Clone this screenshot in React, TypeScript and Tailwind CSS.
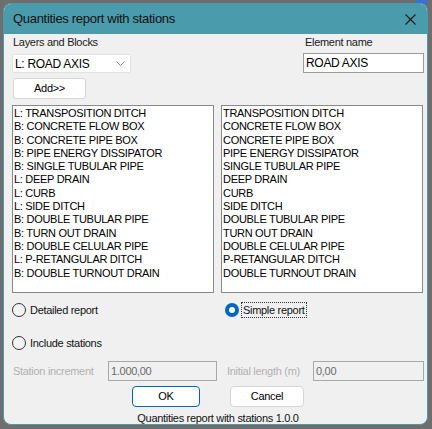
import React from "react";

const LAYERS = [
  "L: TRANSPOSITION DITCH",
  "B: CONCRETE FLOW BOX",
  "B: CONCRETE PIPE BOX",
  "B: PIPE ENERGY DISSIPATOR",
  "B: SINGLE TUBULAR PIPE",
  "L: DEEP DRAIN",
  "L: CURB",
  "L: SIDE DITCH",
  "B: DOUBLE TUBULAR PIPE",
  "B: TURN OUT DRAIN",
  "B: DOUBLE CELULAR PIPE",
  "L: P-RETANGULAR DITCH",
  "B: DOUBLE TURNOUT DRAIN",
];

// nomes sem o prefixo de camada/bloco
const NAMES = LAYERS.map((l) => l.slice(3));

function Radio({ checked, label, focused }: { checked?: boolean; label: string; focused?: boolean }) {
  return (
    <div className="flex items-center h-[16px]">
      {checked ? (
        <span className="w-[14px] h-[14px] rounded-full bg-[#0067c0] flex items-center justify-center shrink-0">
          <span className="w-[6px] h-[6px] rounded-full bg-white" />
        </span>
      ) : (
        <span className="w-[14px] h-[14px] rounded-full border border-[#333333] bg-[#f3f3f3] shrink-0" />
      )}
      <span
        className={`ml-[2px] px-[1px] leading-[14px] text-[#111] ${
          focused ? "border border-dotted border-[#333]" : "border border-transparent"
        }`}
      >
        {label}
      </span>
    </div>
  );
}

function ListBox({ items }: { items: string[] }) {
  return (
    <div className="w-[202px] h-[188px] bg-white border border-[#8a8a8a] pl-[1px] pt-[1px]">
      {items.map((it) => (
        <div key={it} className="leading-[13.3px] text-black whitespace-nowrap">
          {it}
        </div>
      ))}
    </div>
  );
}

export default function App() {
  return (
    <div
      className="relative w-[432px] h-[429px] bg-[#6e6e6e] pt-[3px] pl-[3px] text-[11px] tracking-[-0.3px]"
      style={{ fontFamily: '"Liberation Sans", Arial, sans-serif' }}
    >
      {/* pedaço azul da janela de trás */}
      <div className="absolute right-[4px] top-0 w-[12px] h-[4px] bg-[#3b6fd8] rounded-tr-[4px]" />

      <div className="relative w-[425px] h-[422px] rounded-[8px] border border-[#4a9bab] bg-[#f0f0f0] overflow-hidden">
        {/* barra de título */}
        <div className="h-[30px] bg-[#4a9bab] flex items-center justify-between pl-[9px] pr-[10px]">
          <span className="text-[13px] text-[#111]">Quantities report with stations</span>
          <svg width="11" height="11" viewBox="0 0 11 11" className="mr-[1px]">
            <path d="M0.5 0.5 L10.5 10.5 M10.5 0.5 L0.5 10.5" stroke="#1a1a1a" strokeWidth="1.1" />
          </svg>
        </div>

        <div className="pl-[8px] pr-[3px]">
          {/* topo: camada e nome */}
          <div className="flex justify-between mt-[2px]">
            <div className="flex flex-col">
              <span className="leading-[13px] pl-[1px] text-[#1a1a1a]">Layers and Blocks</span>
              <div className="mt-[5px] w-[119px] h-[19px] bg-white border border-[#e2e2e2] rounded-[2px] flex items-center justify-between pl-[2px] pr-[5px]">
                <span className="text-[12px] text-black">L: ROAD AXIS</span>
                <svg width="9" height="6" viewBox="0 0 9 6">
                  <path d="M0.5 0.5 L4.5 4.5 L8.5 0.5" fill="none" stroke="#8a8a8a" strokeWidth="1" />
                </svg>
              </div>
              <button className="mt-[5px] ml-[1px] w-[73px] h-[21px] bg-white border border-[#d6d6d6] rounded-[3px] text-[11px] text-black">
                Add&gt;&gt;
              </button>
            </div>
            <div className="flex flex-col w-[121px]">
              <span className="leading-[13px] pl-[2px] text-[#1a1a1a]">Element name</span>
              <div className="mt-[4px] h-[20px] bg-white border border-[#9a9a9a] flex items-center pl-[2px] text-[12px] text-black">
                ROAD AXIS
              </div>
            </div>
          </div>

          {/* listas */}
          <div className="flex gap-[7px] mt-[6px]">
            <ListBox items={LAYERS} />
            <ListBox items={NAMES} />
          </div>

          {/* tipo de relatório */}
          <div className="flex mt-[9px]">
            <div className="w-[209px]">
              <Radio label="Detailed report" />
            </div>
            <div className="pl-[4px]">
              <Radio checked focused label="Simple report" />
            </div>
          </div>

          <div className="mt-[17px]">
            <Radio label="Include stations" />
          </div>

          {/* estacas */}
          <div className="flex items-center mt-[10px] h-[20px]">
            <span className="w-[96px] pl-[1px] text-[#b0b0b0]">Station increment</span>
            <div className="w-[109px] h-[20px] border border-[#a8a8a8] bg-[#f0f0f0] pl-[2px] flex items-center text-[#6a6a6a]">
              1.000,00
            </div>
            <span className="w-[96px] pl-[10px] text-[#b0b0b0]">Initial length (m)</span>
            <div className="w-[111px] h-[20px] border border-[#a8a8a8] bg-[#f0f0f0] pl-[2px] flex items-center text-[#6a6a6a]">
              0,00
            </div>
          </div>

          {/* botões */}
          <div className="flex justify-center gap-[30px] mt-[5px]">
            <button className="w-[68px] h-[21px] bg-white border border-[#0067c0] rounded-[4px] text-black">
              OK
            </button>
            <button className="w-[74px] h-[21px] bg-white border border-[#d6d6d6] rounded-[4px] text-black">
              Cancel
            </button>
          </div>

          <div className="mt-[5px] text-center leading-[13px] text-[#111]">
            Quantities report with stations 1.0.0
          </div>
        </div>
      </div>
    </div>
  );
}
